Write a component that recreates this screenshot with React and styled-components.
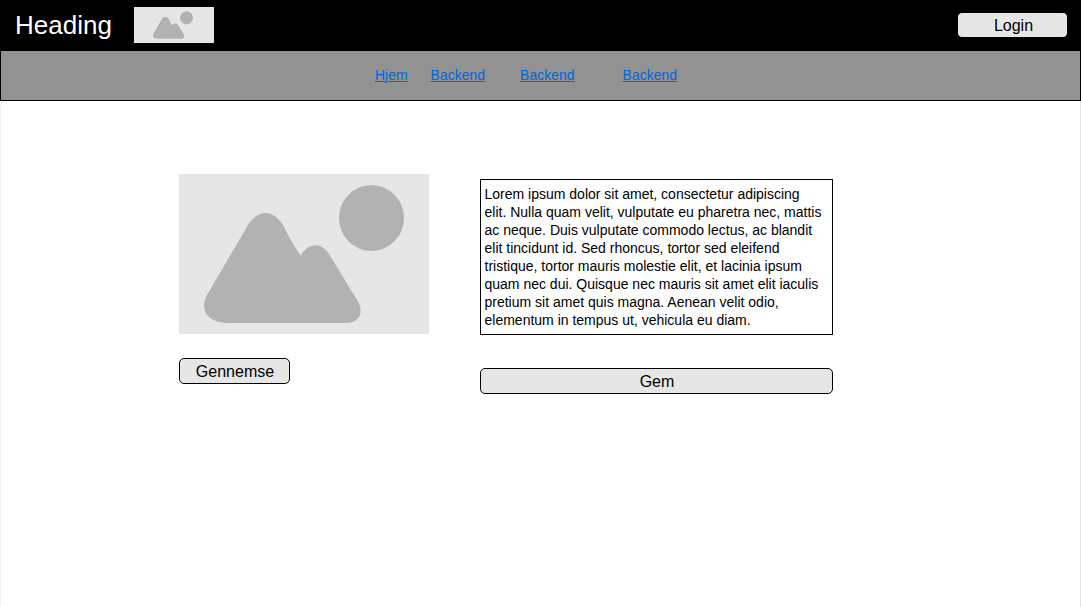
import React from "react";
import styled, { createGlobalStyle } from "styled-components";

const GlobalStyle = createGlobalStyle`
  *, *::before, *::after { box-sizing: border-box; }
  body {
    margin: 0;
    background: #fff;
    color: #000;
    font-family: "Liberation Sans", Arial, Helvetica, sans-serif;
  }
`;

const Page = styled.div`
  display: flex;
  flex-direction: column;
  min-height: 100vh;
`;

const Header = styled.header`
  display: flex;
  align-items: center;
  gap: 22px;
  height: 50px;
  padding: 0 13px 0 15px;
  background: #000;
`;

const Title = styled.h1`
  margin: 0;
  color: #fff;
  font-size: 26px;
  font-weight: 400;
  line-height: 30px;
`;

const Button = styled.button`
  width: ${({ $wide }) => ($wide ? "100%" : "111px")};
  height: 26px;
  padding: 2px 0 0 2px;
  border: 1px solid #000;
  border-radius: 5px;
  background: #e6e6e6;
  color: #000;
  font-family: inherit;
  font-size: 16px;
  line-height: 22px;
  cursor: pointer;
`;

const HeaderActions = styled.div`
  margin-left: auto;
`;

const Nav = styled.nav`
  display: flex;
  align-items: center;
  justify-content: center;
  height: 51px;
  padding: 0 29px 2px 0;
  border: 1px solid #000;
  background: #929292;
`;

const NavLink = styled.a`
  margin-left: ${({ $space }) => $space}px;
  color: #0066dd;
  font-size: 14px;
  line-height: 18px;
  text-decoration: underline;
`;

const Main = styled.main`
  display: flex;
  flex: 1;
  align-items: flex-start;
  justify-content: center;
  gap: 51px;
  padding: 73px 70px 24px 0;
  border-left: 1px solid #f0f0f0;
  border-right: 1px solid #e4e4e4;
`;

const ImageColumn = styled.section`
  display: flex;
  flex-direction: column;
  align-items: flex-start;
  gap: 24px;
`;

const TextColumn = styled.form`
  display: flex;
  flex-direction: column;
  gap: 33px;
  width: 353px;
  padding-top: 5px;
`;

const TextBox = styled.textarea`
  display: block;
  width: 100%;
  height: 156px;
  padding: 5px 4px;
  overflow: hidden;
  resize: none;
  border: 1px solid #000;
  border-radius: 0;
  background: #fff;
  color: #000;
  font-family: inherit;
  font-size: 14px;
  line-height: 18px;
`;

const Picture = styled.svg`
  display: block;
  flex: none;
  width: ${({ $small }) => ($small ? "80px" : "250px")};
  height: ${({ $small }) => ($small ? "36px" : "160px")};
  padding: ${({ $small }) => ($small ? "2px 3px 2px 1px" : "0")};
  background: #e6e6e6;
  fill: #b2b2b2;
`;

function Placeholder({ small, label }) {
  return (
    <Picture $small={small} viewBox="0 0 250 160" role="img" aria-label={label}>
      <path d="M69 51 C79 35 94 35 104 51 C110 63 115 72 121.5 81.5 C130 68 142 68 150 80 L178 126 C186 139 180 149 166 149 L48 149 C29 149 20 136 28 121 Z" />
      <ellipse cx="192.500" cy="44" rx="32.500" ry="33" />
    </Picture>
  );
}

const links = [
  { label: "Hjem", space: 0 },
  { label: "Backend", space: 23 },
  { label: "Backend", space: 35 },
  { label: "Backend", space: 48 },
];

const lorem = [
  "Lorem ipsum dolor sit amet, consectetur adipiscing",
  "elit. Nulla quam velit, vulputate eu pharetra nec, mattis",
  "ac neque. Duis vulputate commodo lectus, ac blandit",
  "elit tincidunt id. Sed rhoncus, tortor sed eleifend",
  "tristique, tortor mauris molestie elit, et lacinia ipsum",
  "quam nec dui. Quisque nec mauris sit amet elit iaculis",
  "pretium sit amet quis magna. Aenean velit odio,",
  "elementum in tempus ut, vehicula eu diam.",
].join("\n");

export default function App() {
  return (
    <>
      <GlobalStyle />
      <Page>
        <Header>
          <Title>Heading</Title>
          <Placeholder small label="Logo" />
          <HeaderActions>
            <Button type="button">Login</Button>
          </HeaderActions>
        </Header>
        <Nav>
          {links.map(({ label, space }, i) => (
            <NavLink key={i} href="#" $space={space}>
              {label}
            </NavLink>
          ))}
        </Nav>
        <Main>
          <ImageColumn>
            <Placeholder label="Billede" />
            <Button type="button">Gennemse</Button>
          </ImageColumn>
          <TextColumn onSubmit={(e) => e.preventDefault()}>
            <TextBox aria-label="Tekst" spellCheck={false} defaultValue={lorem} />
            <Button $wide type="submit">
              Gem
            </Button>
          </TextColumn>
        </Main>
      </Page>
    </>
  );
}
